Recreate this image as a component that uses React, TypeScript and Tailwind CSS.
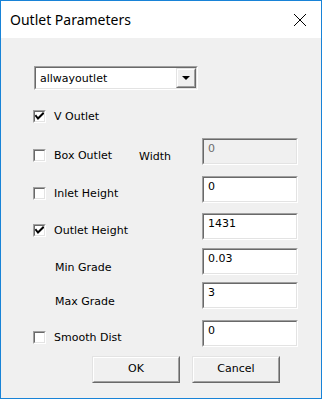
import React from "react";

const font = { fontFamily: '"DejaVu Sans", sans-serif' };

function Sunken({ children, className = "", inner = "" }: { children?: React.ReactNode; className?: string; inner?: string }) {
  return (
    <div className={"border-t border-l border-t-[#a0a0a0] border-l-[#a0a0a0] border-b border-r border-b-white border-r-white " + className}>
      <div className={"h-full w-full border-t border-l border-t-[#696969] border-l-[#696969] border-b border-r border-b-[#e3e3e3] border-r-[#e3e3e3] " + inner}>
        {children}
      </div>
    </div>
  );
}

function Raised({ children, className = "", inner = "" }: { children?: React.ReactNode; className?: string; inner?: string }) {
  return (
    <div className={"border-t border-l border-t-[#e3e3e3] border-l-[#e3e3e3] border-b border-r border-b-[#696969] border-r-[#696969] " + className}>
      <div className={"h-full w-full border-t border-l border-t-white border-l-white border-b border-r border-b-[#a0a0a0] border-r-[#a0a0a0] " + inner}>
        {children}
      </div>
    </div>
  );
}

function Check({ checked }: { checked?: boolean }) {
  return (
    <Sunken className="w-[13px] h-[13px] shrink-0" inner="bg-white flex items-center justify-center">
      {checked && (
        <svg width="9" height="9" viewBox="0 0 9 9">
          <path d="M1 4 L3 6.5 L8 1.5" fill="none" stroke="#000" strokeWidth="2" strokeLinecap="square" />
        </svg>
      )}
    </Sunken>
  );
}

function Input({ value, disabled }: { value: string; disabled?: boolean }) {
  return (
    <Sunken
      className="w-[96px] h-[27px] shrink-0"
      inner={(disabled ? "bg-[#f0f0f0] text-[#6d6d6d] " : "bg-white text-black ") + "pl-[4px] pt-[2px] text-[11px] leading-[13px]"}
    >
      {value}
    </Sunken>
  );
}

function Row({
  mt,
  check,
  checked,
  label,
  value,
  disabled,
  extra,
  labelTop = 11,
}: {
  mt: string;
  check?: boolean;
  checked?: boolean;
  label: string;
  value?: string;
  disabled?: boolean;
  extra?: React.ReactNode;
  labelTop?: number;
}) {
  return (
    <div className={"flex h-[27px] " + mt}>
      <div className="ml-[32px] w-[169px] shrink-0 flex">
        <div className={"flex items-center h-[13px] " + (labelTop === 11 ? "mt-[11px]" : "mt-[13px]")}>
          {check ? <Check checked={checked} /> : <div className="w-[14px]" />}
          <span className="ml-[8px] text-[11px] leading-[13px] text-black whitespace-nowrap">{label}</span>
        </div>
        {extra}
      </div>
      {value !== undefined && <Input value={value} disabled={disabled} />}
    </div>
  );
}

export default function App() {
  return (
    <div className="w-[322px] h-[399px] border border-[#1883d7] bg-[#f0f0f0] flex flex-col" style={font}>
      <div className="h-[37px] bg-white flex items-center justify-between shrink-0">
        <span className="ml-[9px] text-[14px] text-black" style={{ fontFamily: '"Noto Sans", sans-serif' }}>
          Outlet Parameters
        </span>
        <svg width="14" height="14" viewBox="0 0 14 14" className="mr-[14px]">
          <path d="M1 1 L13 13 M13 1 L1 13" stroke="#000" strokeWidth="1" fill="none" />
        </svg>
      </div>

      <Sunken className="ml-[33px] mt-[28px] w-[164px] h-[24px] shrink-0" inner="bg-white flex items-center justify-between">
        <span className="ml-[4px] text-[11px] leading-[13px] text-black">allwayoutlet</span>
        <Raised className="w-[20px] h-[20px]" inner="bg-[#f0f0f0] flex items-center justify-center">
          <svg width="8" height="4" viewBox="0 0 8 4">
            <path d="M0 0 L8 0 L4 4 Z" fill="#000" />
          </svg>
        </Raised>
      </Sunken>

      <Row mt="mt-[9px]" check checked label="V Outlet" />
      <Row
        mt="mt-[12px]"
        check
        label="Box Outlet"
        value="0"
        disabled
        extra={<span className="ml-[27px] mt-[12px] text-[11px] leading-[13px] text-black h-[13px] flex items-center">Width</span>}
      />
      <Row mt="mt-[11px]" check label="Inlet Height" value="0" />
      <Row mt="mt-[10px]" check checked label="Outlet Height" value="1431" />
      <Row mt="mt-[8px]" label="Min Grade" value="0.03" labelTop={13} />
      <Row mt="mt-[7px]" label="Max Grade" value="3" labelTop={13} />
      <Row mt="mt-[11px]" check label="Smooth Dist" value="0" />

      <div className="flex mt-[9px] ml-[91px] gap-[12px]">
        <Raised className="w-[88px] h-[27px]" inner="bg-[#f0f0f0] flex items-center justify-center text-[11px] text-black">
          OK
        </Raised>
        <Raised className="w-[88px] h-[27px]" inner="bg-[#f0f0f0] flex items-center justify-center text-[11px] text-black">
          Cancel
        </Raised>
      </div>
    </div>
  );
}
